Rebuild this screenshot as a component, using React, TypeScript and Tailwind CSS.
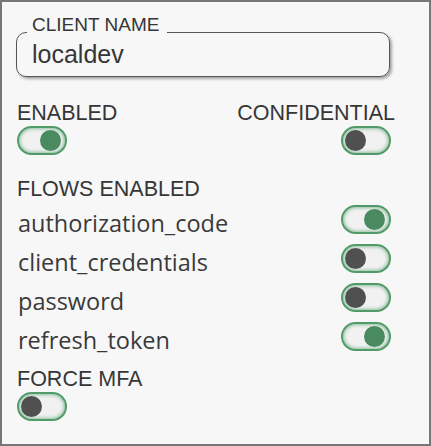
import React from "react";

const flows: { name: string; on: boolean }[] = [
  { name: "authorization_code", on: true },
  { name: "client_credentials", on: false },
  { name: "password", on: false },
  { name: "refresh_token", on: true },
];

function Toggle({ on, className = "" }: { on: boolean; className?: string }) {
  return (
    <div
      className={`flex h-[29px] w-[50px] shrink-0 items-center rounded-full border-2 border-[#519b69] bg-[#f1f1f1] pl-[2px] pr-[4px] shadow-[inset_0_0_4px_#5aa574] ${
        on ? "justify-end" : "justify-start"
      } ${className}`}
    >
      <div className={`h-[21px] w-[21px] rounded-full ${on ? "bg-[#4a8a5f]" : "bg-[#505050]"}`} />
    </div>
  );
}

export default function App() {
  return (
    <div
      className="h-[446px] w-[431px] border-2 border-[#777] bg-[#f7f7f7] pl-[15px] pr-[34px] text-[#363636]"
      style={{ fontFamily: '"Liberation Sans", Arial, sans-serif' }}
    >
      {/* client name */}
      <div className="relative -ml-px mr-[5px] mt-[30px] h-[45px] rounded-[10px] border-[1.5px] border-[#555] shadow-[2px_2px_3px_rgba(0,0,0,0.35)]">
        <span className="absolute left-[10px] top-[-19px] h-[22px] bg-[#f7f7f7] pl-[5px] pr-[8px] text-[19px] leading-[22px]">
          CLIENT NAME
        </span>
        <div className="flex h-full items-center pl-[15px] text-[25px] leading-none">localdev</div>
      </div>

      <div className="mt-[24px] flex justify-between">
        <div className="flex flex-col items-start">
          <span className="text-[21.5px] leading-[24px]">ENABLED</span>
          <Toggle on className="mt-[1px]" />
        </div>
        <div className="flex flex-col items-end">
          <span className="text-[21.5px] leading-[24px]">CONFIDENTIAL</span>
          <Toggle on={false} className="mr-[4px] mt-[1px]" />
        </div>
      </div>

      <div className="mt-[22px] text-[21.5px] leading-[24px]">FLOWS ENABLED</div>
      <div className="mt-[4px] flex flex-col gap-[10px]">
        {flows.map((f) => (
          <div key={f.name} className="flex h-[29px] items-center justify-between">
            <span
              className="ml-px pt-[8px] text-[23.5px] leading-none text-[#3a3a3a]"
              style={{ fontFamily: '"Open Sans", sans-serif' }}
            >
              {f.name}
            </span>
            <Toggle on={f.on} className="mr-[4px]" />
          </div>
        ))}
      </div>

      <div className="mt-[16px] text-[21.5px] leading-[24px]">FORCE MFA</div>
      <Toggle on={false} className="mt-[1px]" />
    </div>
  );
}
